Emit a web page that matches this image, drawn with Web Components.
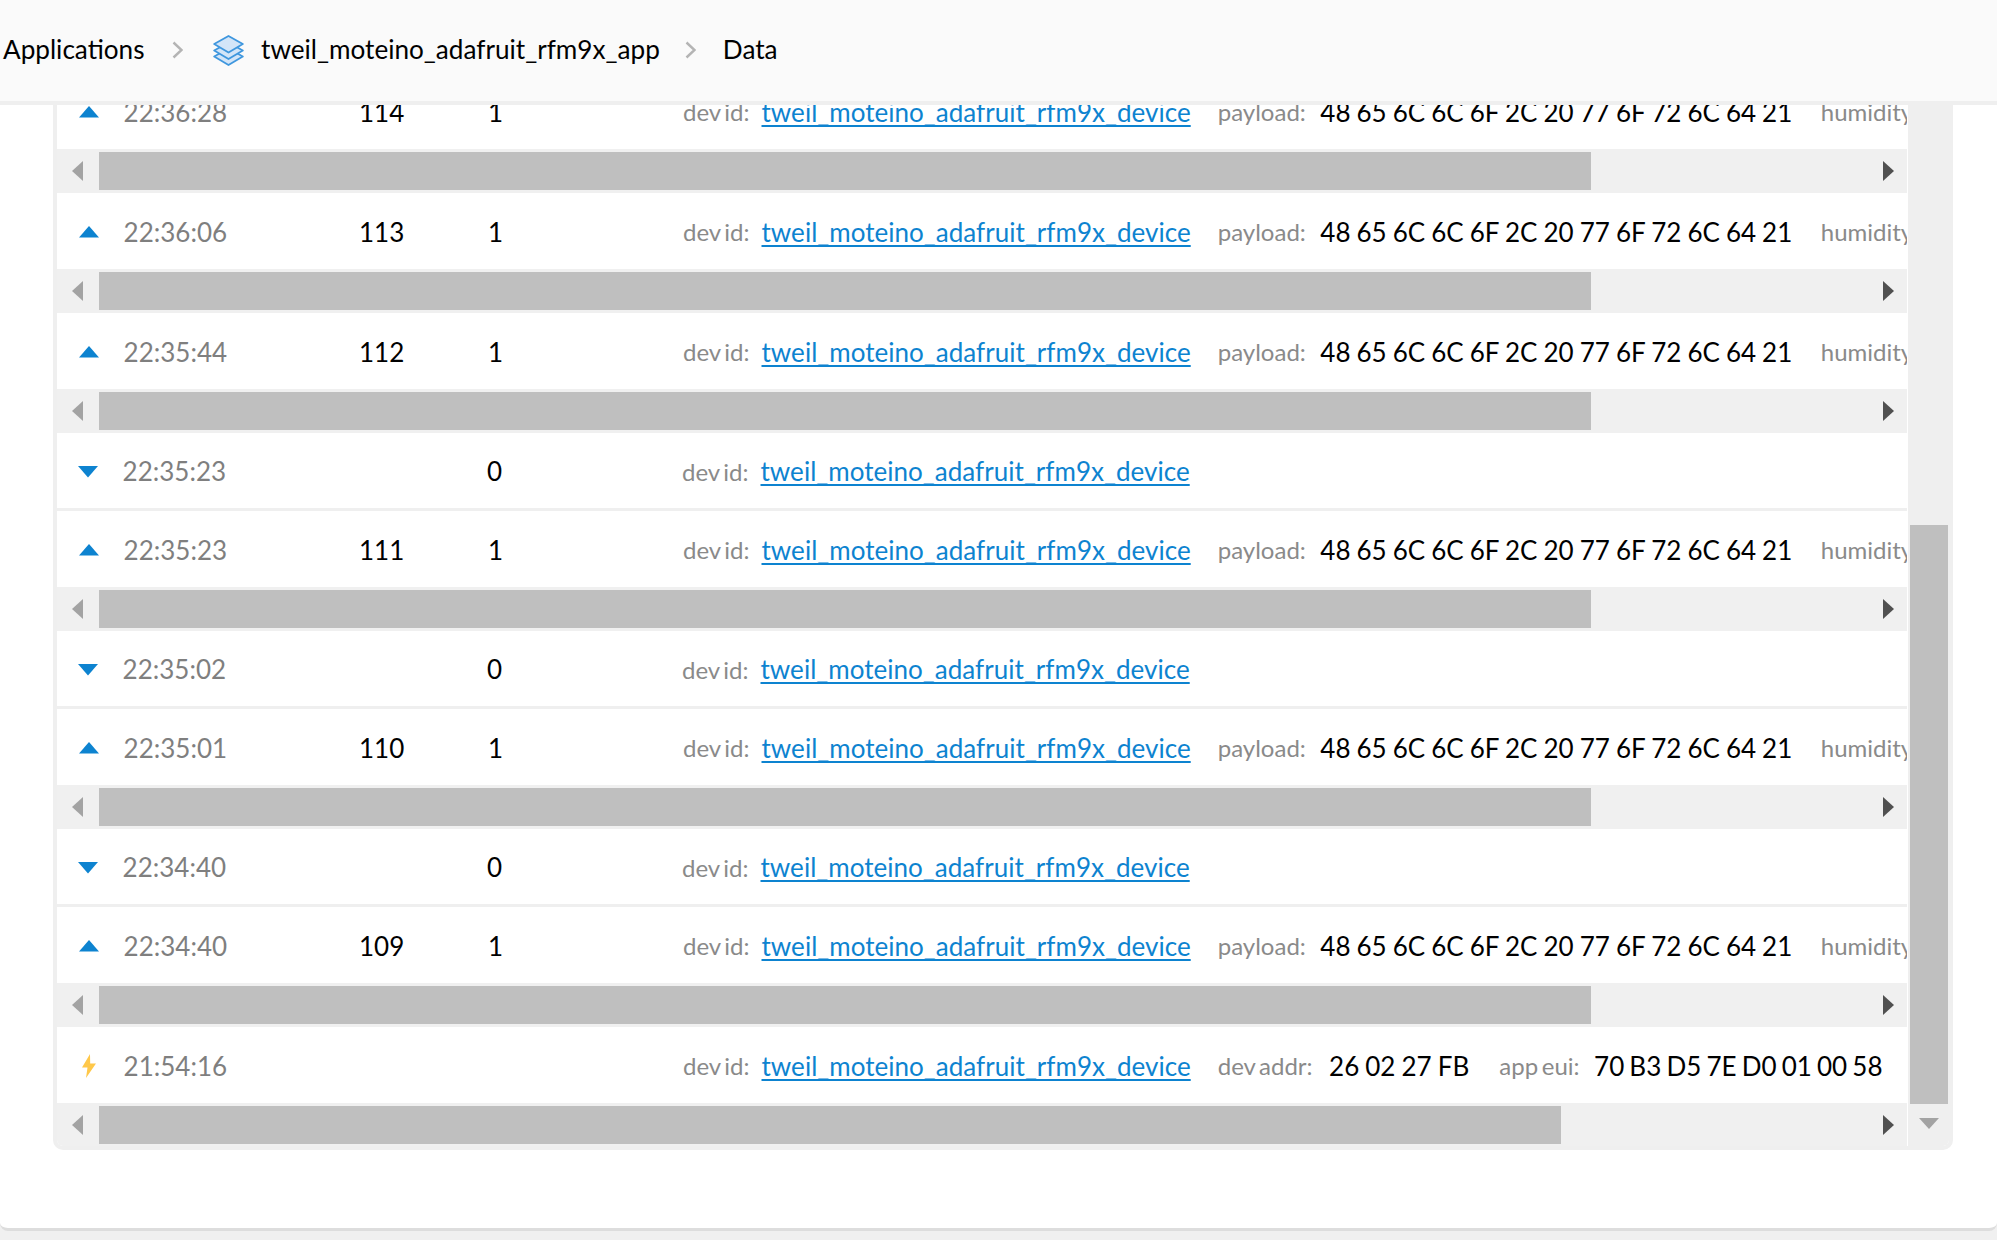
<!DOCTYPE html>
<html>
<head>
<meta charset="utf-8">
<title>Data</title>
<style>
   html, body { margin: 0; height: 1240px; overflow: hidden; background: #f0f0f0; }
   body { font: 26px/1.2 Lato, "Liberation Sans", sans-serif; color: #000; }
</style>
</head>
<body>
<app-page>
   <app-breadcrumb slot="header">
      <span>Applications</span>
      <crumb-sep></crumb-sep>
      <stack-icon></stack-icon>
      <span class="app">tweil_moteino_adafruit_rfm9x_app</span>
      <crumb-sep style="margin: 0 27px 0 25px"></crumb-sep>
      <span>Data</span>
   </app-breadcrumb>
   <log-card>
      <log-row kind="up" time="22:36:28" count="114" port="1" payload></log-row>
      <log-row kind="up" time="22:36:06" count="113" port="1" payload></log-row>
      <log-row kind="up" time="22:35:44" count="112" port="1" payload></log-row>
      <log-row kind="down" time="22:35:23" port="0"></log-row>
      <log-row kind="up" time="22:35:23" count="111" port="1" payload></log-row>
      <log-row kind="down" time="22:35:02" port="0"></log-row>
      <log-row kind="up" time="22:35:01" count="110" port="1" payload></log-row>
      <log-row kind="down" time="22:34:40" port="0"></log-row>
      <log-row kind="up" time="22:34:40" count="109" port="1" payload></log-row>
      <log-row kind="activation" time="21:54:16"></log-row>
   </log-card>
</app-page>

<script>
// page shell: header on top, white panel below it
class AppPage extends HTMLElement {
   constructor() {
      super();
      this.attachShadow({ mode: "open" }).innerHTML = `
         <style>
            :host { display: flex; flex-direction: column; height: 1231px; }
            #panel {
               flex: 1; min-height: 0;
               background: #fff;
               border-bottom: 3px solid #ddd;
               border-radius: 0 0 8px 8px;
               padding: 0 44px 78px 53px;
            }
         </style>
         <slot name="header"></slot>
         <div id="panel"><slot></slot></div>`;
   }
}

class AppBreadcrumb extends HTMLElement {
   constructor() {
      super();
      this.attachShadow({ mode: "open" }).innerHTML = `
         <style>
            :host {
               display: flex; align-items: center;
               box-sizing: border-box; height: 105px;
               padding: 0 0 1px 3px;
               background: #fafafa;
               border-bottom: 4px solid #efefef;
               flex: none;
               font-size: 26.15px;
            }
         </style>
         <slot></slot>`;
   }
}

class CrumbSep extends HTMLElement {
   constructor() {
      super();
      this.attachShadow({ mode: "open" }).innerHTML = `
         <style>:host { display: block; margin: 0 27px; line-height: 0; }</style>
         <svg width="11" height="18" viewBox="0 0 11 18"><path d="M1.5 1.5 9.5 9 1.5 16.5" fill="none" stroke="#b4b4b4" stroke-width="2.4"/></svg>`;
   }
}

class StackIcon extends HTMLElement {
   constructor() {
      super();
      this.attachShadow({ mode: "open" }).innerHTML = `
         <style>:host { display: block; margin: 0 17.500px 0 3px; line-height: 0; }</style>
         <svg width="31" height="31" viewBox="0 0 31 31" fill="#d3e5f8" stroke="#3f97de" stroke-width="1.8" stroke-linejoin="round">
            <path d="M1.200 21.500 15.500 13.500l14.300 8-14.300 8.500z"/>
            <path d="M1.200 15.500 15.500 7.500l14.300 8-14.300 8.500z"/>
            <path d="M1.200 9 15.500 1l14.300 8-14.300 8.500z"/>
         </svg>`;
   }
}

// scrollbars are drawn, the rows only clip
class HScroll extends HTMLElement {
   static get observedAttributes() { return ["thumb"]; }
   constructor() {
      super();
      this.attachShadow({ mode: "open" }).innerHTML = `
         <style>
            :host {
               display: flex; align-items: center;
               box-sizing: border-box; height: 44px;
               padding: 3px 0;
               background: #f0f0f0;
            }
            .arrow { flex: none; display: flex; line-height: 0; }
            #left { width: 42px; justify-content: flex-start; padding-left: 15px; box-sizing: border-box; }
            #thumb { height: 38px; background: #bfbfbf; flex: none; }
            #rest { flex: 1; }
            #right { width: 24px; }
         </style>
         <div class="arrow" id="left"><svg width="11" height="20"><path d="M11 0V20L0 10z" fill="#a3a3a3"/></svg></div>
         <div id="thumb"></div>
         <div id="rest"></div>
         <div class="arrow" id="right"><svg width="11" height="20"><path d="M0 0V20L11 10z" fill="#505050"/></svg></div>`;
   }
   attributeChangedCallback(name, old, val) {
      if (this.shadowRoot) this.shadowRoot.getElementById("thumb").style.width = val + "px";
   }
}

class LogIcon extends HTMLElement {
   static get observedAttributes() { return ["kind"]; }
   constructor() {
      super();
      this.attachShadow({ mode: "open" });
   }
   attributeChangedCallback(name, old, kind) {
      const icons = {
         up: `<svg width="20" height="12"><path d="M0 11.500 10 0l10 11.500z" fill="#0d83d0"/></svg>`,
         down: `<svg width="20" height="12"><path d="M0 0 10 11.500 20 0z" fill="#0d83d0"/></svg>`,
         activation: `<svg width="14" height="24" style="margin-left:3px"><path d="M8 0 0 13.500h5.500L4 24 14 9.500H8.200z" fill="#ffc84a"/></svg>`,
      };
      this.shadowRoot.innerHTML = `<style>:host { display: block; line-height: 0; }</style>` + icons[kind];
   }
}

class LogField extends HTMLElement {
   constructor() {
      super();
      this.attachShadow({ mode: "open" }).innerHTML = `
         <style>
            :host { display: flex; align-items: center; flex: none; white-space: nowrap; }
            #label { color: #8a8a8a; font-size: 24px; word-spacing: -2.500px; }
            #label:not(:empty) { margin-right: var(--label-gap, 14.500px); }
         </style>
         <span id="label"></span><slot></slot>`;
      this.shadowRoot.getElementById("label").textContent = this.getAttribute("label") || "";
   }
}

const DEVICE = "tweil_moteino_adafruit_rfm9x_device";
const HELLO = "48 65 6C 6C 6F 2C 20 77 6F 72 6C 64 21";

class LogRow extends HTMLElement {
   constructor() {
      super();
      const kind = this.getAttribute("kind");
      const hasPayload = this.hasAttribute("payload");
      const isActivation = kind === "activation";
      let extra = "";
      if (hasPayload) {
         extra = `
            <log-field label="payload:" style="margin-left:27px"><span class="hex">${HELLO}</span></log-field>
            <log-field label="humidity" style="margin-left:28.500px"></log-field>`;
      } else if (isActivation) {
         extra = `
            <log-field label="dev addr:" style="margin-left:27px;--label-gap:16.500px"><span class="hex">26 02 27 FB</span></log-field>
            <log-field label="app eui:" style="margin-left:30px"><span class="hex eui">70 B3 D5 7E D0 01 00 58</span></log-field>`;
      }
      const scrollbar = hasPayload ? `<h-scroll thumb="1492"></h-scroll>`
         : isActivation ? `<h-scroll thumb="1462"></h-scroll>` : "";
      const collapsed = !scrollbar;
      this.attachShadow({ mode: "open" }).innerHTML = `
         <style>
            :host { display: block; }
            #line {
               display: grid;
               grid-template-columns: 44.600px 235.400px 129px 195px 1fr;
               align-items: center;
               box-sizing: border-box;
               height: ${collapsed ? 78 : 76}px;
               padding: 3px 0 0 ${collapsed ? 21 : 22}px;
               background: #fff;
               overflow: hidden;
               ${collapsed ? "border-bottom: 3px solid #efefef;" : ""}
            }
            log-icon { margin-top: -1px; }
            #time { color: #7f7f7f; }
            #details { display: flex; min-width: 0; overflow: hidden; align-items: center; }
            #details > log-field:first-child { --label-gap: 12px; }
            .hex { word-spacing: -0.600px; }
            .eui { word-spacing: -1.500px; }
            a { color: #0d83d0; letter-spacing: 0.030px; text-decoration: underline; text-decoration-thickness: 2px; text-underline-offset: 3px; }
         </style>
         <div id="line">
            <log-icon kind="${kind}"></log-icon>
            <span id="time">${this.getAttribute("time")}</span>
            <span>${this.getAttribute("count") || ""}</span>
            <span>${this.getAttribute("port") || ""}</span>
            <div id="details">
               <log-field label="dev id:"><a href="#">${DEVICE}</a></log-field>${extra}
            </div>
         </div>
         ${scrollbar}`;
   }
}

class VScroll extends HTMLElement {
   constructor() {
      super();
      this.attachShadow({ mode: "open" }).innerHTML = `
         <style>
            :host {
               display: flex; flex-direction: column; align-items: center;
               box-sizing: border-box; width: 41px;
               padding: 420px 1px 0 2px;
               background: #efefef;
            }
            #thumb { width: 38px; height: 579px; background: #bfbfbf; flex: none; }
            #down { margin-top: 14px; line-height: 0; }
         </style>
         <div id="thumb"></div>
         <div id="down"><svg width="20" height="11"><path d="M0 0H20L10 11z" fill="#a3a3a3"/></svg></div>`;
   }
}

class LogCard extends HTMLElement {
   constructor() {
      super();
      this.attachShadow({ mode: "open" }).innerHTML = `
         <style>
            :host {
               display: flex;
               box-sizing: border-box; height: 1045px;
               border: 4px solid #efefef; border-top: 0;
               border-radius: 0 0 10px 10px;
               overflow: hidden;
               background: #fff;
            }
            #rows { flex: none; width: 1850px; margin-right: 1px; overflow: hidden; }
            ::slotted(:first-child) { margin-top: -32px; }
         </style>
         <div id="rows"><slot></slot></div>
         <v-scroll></v-scroll>`;
   }
}

customElements.define("app-page", AppPage);
customElements.define("app-breadcrumb", AppBreadcrumb);
customElements.define("crumb-sep", CrumbSep);
customElements.define("stack-icon", StackIcon);
customElements.define("h-scroll", HScroll);
customElements.define("log-icon", LogIcon);
customElements.define("log-field", LogField);
customElements.define("log-row", LogRow);
customElements.define("v-scroll", VScroll);
customElements.define("log-card", LogCard);
</script>
</body>
</html>
